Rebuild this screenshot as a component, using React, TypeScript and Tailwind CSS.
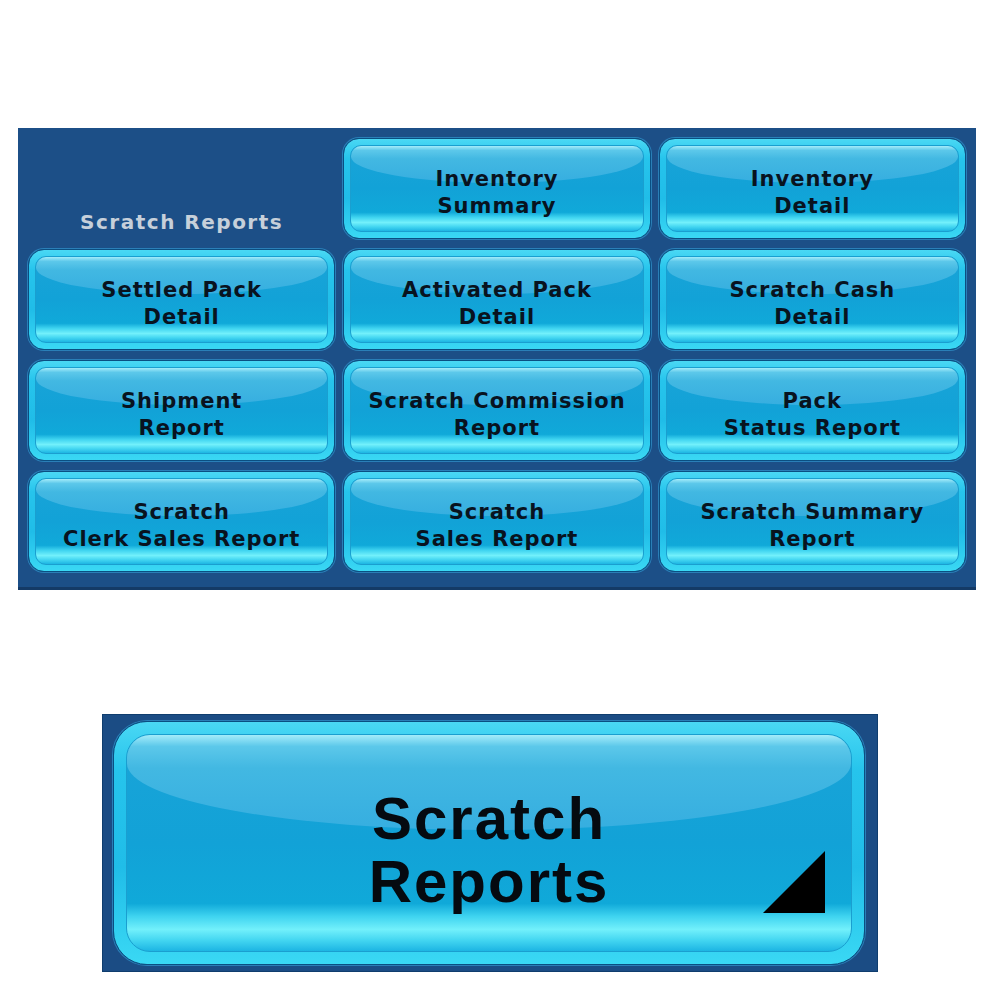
import React from "react";

type GlassButtonProps = {
  lines: string[];
  size?: "sm" | "lg";
  corner?: boolean;
};

const reports: string[][] = [
  ["Inventory", "Summary"],
  ["Inventory", "Detail"],
  ["Settled Pack", "Detail"],
  ["Activated Pack", "Detail"],
  ["Scratch Cash", "Detail"],
  ["Shipment", "Report"],
  ["Scratch Commission", "Report"],
  ["Pack", "Status Report"],
  ["Scratch", "Clerk Sales Report"],
  ["Scratch", "Sales Report"],
  ["Scratch Summary", "Report"],
];

function GlassButton({ lines, size = "sm", corner = false }: GlassButtonProps) {
  const lg = size === "lg";
  return (
    <div
      className={`h-full border border-[#0a4f82] bg-[linear-gradient(180deg,#4ad8f4_0%,#26c4ec_20%,#20bde8_60%,#3ad8f4_100%)] shadow-[0_0_0_1px_#2a7fb8] ${
        lg ? "rounded-[34px] p-[12px]" : "rounded-[16px] p-[6px]"
      }`}
    >
      <div
        className={`relative flex h-full flex-col items-center justify-center overflow-hidden border border-[#1a9fd0] bg-[linear-gradient(180deg,#1aa4d8_0%,#12a2d7_50%,#10a9d9_78%,#3fd4f0_84%,#72f0fb_90%,#43d6f1_95%,#1db5e3_100%)] ${
          lg ? "rounded-[24px] pt-[14px]" : "rounded-[11px] pt-[8px]"
        }`}
      >
        {/* glossy top sheen */}
        <div className="absolute inset-x-0 top-0 h-[44%] rounded-b-[50%_70%] bg-[linear-gradient(180deg,#a4ecfa_0%,#5cc8ea_12%,#42b8e2_35%,#36aee0_100%)]" />
        {lines.map((line) => (
          <span
            key={line}
            className={
              lg
                ? "relative font-['Liberation_Sans',Arial,sans-serif] text-[60px] font-bold leading-[63px] tracking-[2px] text-[#050a10]"
                : "relative font-['DejaVu_Sans',Verdana,sans-serif] text-[21px] font-bold leading-[27px] tracking-[1px] text-[#08131f]"
            }
          >
            {line}
          </span>
        ))}
        {corner && (
          <svg
            className="absolute bottom-[38px] right-[26px]"
            width="62"
            height="62"
            viewBox="0 0 62 62"
          >
            <polygon points="62,0 62,62 0,62" fill="#000" />
          </svg>
        )}
      </div>
    </div>
  );
}

export default function App() {
  return (
    <div className="flex h-[1000px] w-[1000px] flex-col bg-white pt-[128px]">
      {/* report menu */}
      <div className="ml-[18px] h-[462px] w-[958px] border-b-[3px] border-[#143a66] bg-[#1c4f87] px-[10px] pb-[18px] pt-[10px]">
        <div className="grid grid-cols-3 grid-rows-[101px_101px_101px_101px] gap-x-[8px] gap-y-[10px]">
          <div className="flex items-end justify-center pb-[2px]">
            <span className="font-['DejaVu_Sans',Verdana,sans-serif] text-[20px] font-bold tracking-[1.5px] text-[#c6d0da]">
              Scratch Reports
            </span>
          </div>
          {reports.map((r) => (
            <GlassButton key={r.join(" ")} lines={r} />
          ))}
        </div>
      </div>

      {/* large launcher button */}
      <div className="ml-[102px] mt-[124px] h-[258px] w-[776px] border border-[#0f3d6e] bg-[#1b4c84] pb-[6px] pl-[10px] pr-[12px] pt-[6px]">
        <GlassButton lines={["Scratch", "Reports"]} size="lg" corner />
      </div>
    </div>
  );
}
